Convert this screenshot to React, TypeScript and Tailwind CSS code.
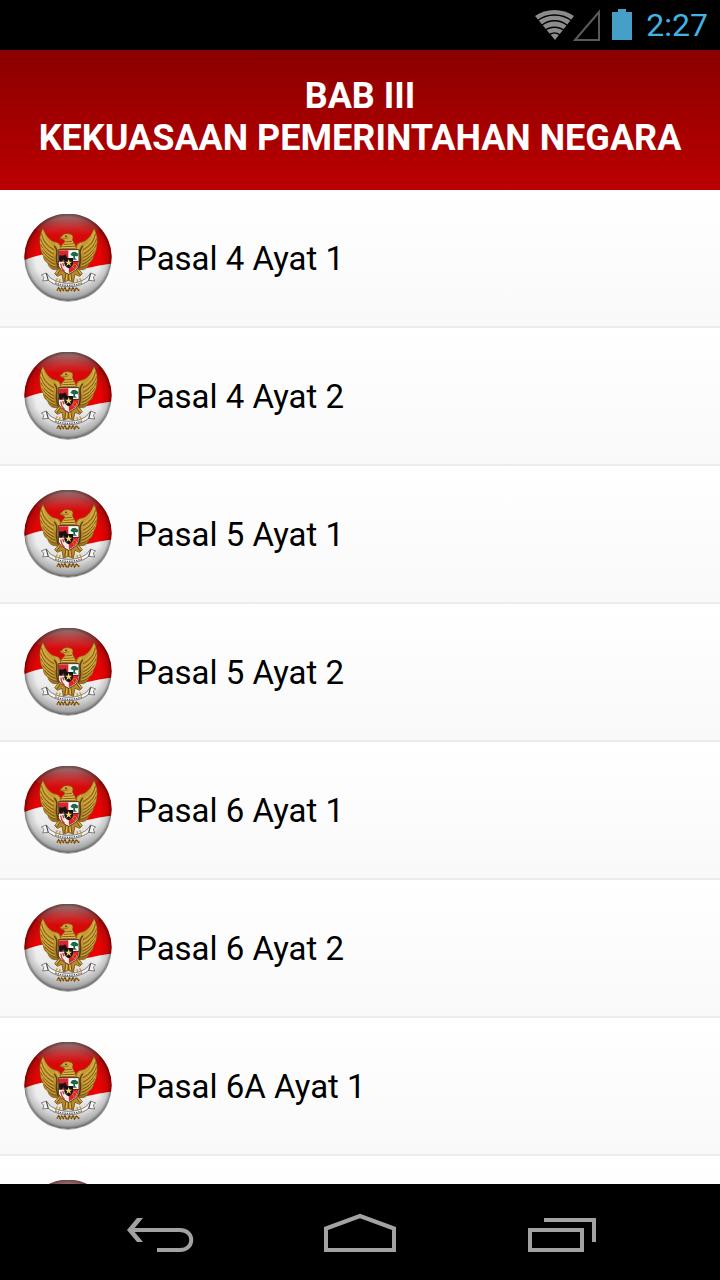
import { useId } from "react";

const articles = [
  "Pasal 4 Ayat 1",
  "Pasal 4 Ayat 2",
  "Pasal 5 Ayat 1",
  "Pasal 5 Ayat 2",
  "Pasal 6 Ayat 1",
  "Pasal 6 Ayat 2",
  "Pasal 6A Ayat 1",
  "Pasal 6A Ayat 2",
];

function Wing({ gold }: { gold: string }) {
  return (
    <g>
      <path
        d="M81 70 C73 84 69 102 72 118 C72 132 76 144 82 152 C82 162 88 170 95 174 C97 184 104 192 113 194 L134 194 L136 132 C135 120 128 112 118 111 C104 110 90 94 81 70 Z"
        fill={gold}
        stroke="#6d4812"
        strokeWidth="1.5"
      />
      <path
        d="M77 86 C80 108 94 124 114 134 M74 101 C79 122 94 137 113 147 M75 118 C81 136 95 149 113 158 M80 137 C87 151 99 160 114 168 M86 154 C94 165 104 172 117 178 M97 174 C104 181 112 184 122 187"
        fill="none"
        stroke="#6d4812"
        strokeWidth="2.5"
      />
      <path
        d="M80 80 C83 104 98 120 116 128 M75 94 C79 115 94 131 113 141 M74 110 C80 129 94 144 112 153 M78 128 C84 144 97 155 113 163 M84 147 C91 159 102 167 115 173 M93 167 C100 176 108 180 119 183"
        fill="none"
        stroke="#e2c04e"
        strokeWidth="2"
      />
      <path
        d="M114 122 C121 128 124 138 122 150 C119 164 122 176 127 190"
        fill="none"
        stroke="#5e3c0e"
        strokeWidth="4"
      />
      <path d="M119 117 C127 121 130 130 127 142" fill="none" stroke="#e2c04e" strokeWidth="3" />
    </g>
  );
}

function GarudaBadge() {
  const id = useId();
  const red = `${id}red`;
  const white = `${id}white`;
  const rim = `${id}rim`;
  const gold = `${id}gold`;
  const gloss = `${id}gloss`;
  const clip = `${id}clip`;
  return (
    <svg viewBox="24 27 264 264" className="size-22 shrink-0" aria-hidden="true">
      <defs>
        <linearGradient id={red} x1="0" y1="0" x2="0" y2="1">
          <stop offset="0" stopColor="#a81014" />
          <stop offset="0.3" stopColor="#d40a0a" />
          <stop offset="1" stopColor="#f00000" />
        </linearGradient>
        <linearGradient id={white} x1="0" y1="0" x2="0" y2="1">
          <stop offset="0" stopColor="#fafafa" />
          <stop offset="0.65" stopColor="#ececec" />
          <stop offset="1" stopColor="#bdbdbd" />
        </linearGradient>
        <linearGradient id={gloss} x1="0" y1="0" x2="0" y2="1">
          <stop offset="0" stopColor="#b8aaaa" stopOpacity="0.9" />
          <stop offset="0.5" stopColor="#b88a8a" stopOpacity="0.4" />
          <stop offset="1" stopColor="#c86060" stopOpacity="0" />
        </linearGradient>
        <radialGradient id={rim}>
          <stop offset="0.74" stopColor="#000" stopOpacity="0" />
          <stop offset="0.92" stopColor="#000" stopOpacity="0.16" />
          <stop offset="1" stopColor="#000" stopOpacity="0.5" />
        </radialGradient>
        <linearGradient id={gold} x1="0" y1="0" x2="0" y2="1">
          <stop offset="0" stopColor="#cda338" />
          <stop offset="0.6" stopColor="#bf9430" />
          <stop offset="1" stopColor="#98701e" />
        </linearGradient>
        <clipPath id={clip}>
          <circle cx="156" cy="157" r="131" />
        </clipPath>
      </defs>
      <circle cx="156" cy="159" r="131" fill="#9a9a9a" />
      <g clipPath={`url(#${clip})`}>
        <rect x="24" y="26" width="264" height="264" fill={`url(#${white})`} />
        <path
          d="M24 26 H288 V176 C262 178 238 184 206 190 C170 178 120 142 92 147 C66 150 44 158 24 166 Z"
          fill={`url(#${red})`}
        />
        <ellipse cx="156" cy="58" rx="106" ry="34" fill={`url(#${gloss})`} />
        <circle cx="156" cy="157" r="131" fill={`url(#${rim})`} />
      </g>

      <Wing gold={`url(#${gold})`} />
      <g transform="translate(315 0) scale(-1 1)">
        <Wing gold={`url(#${gold})`} />
      </g>

      <path
        d="M130 188 L116 206 L124 214 L138 208 L142 232 L157 226 L172 232 L177 208 L191 214 L199 206 L185 188 Z"
        fill="#b98a28"
        stroke="#5c3b0c"
        strokeWidth="2"
      />
      <path d="M150 204 L146 228 M157 206 V226 M164 204 L168 228 M134 194 L122 210 M181 194 L193 210" stroke="#6b4610" strokeWidth="2.5" />
      <path d="M153 206 L151 226 M161 206 L164 226 M128 196 L120 206 M187 196 L195 206" stroke="#efcc5c" strokeWidth="2.5" />

      <path
        d="M131 97 L138 94 C140 86 152 84 161 87 C169 88 173 94 170 101 C169 107 174 112 178 120 L182 136 H133 C133 125 138 118 145 112 C147 108 146 106 142 104 C138 101 134 102 131 105 L135 100 Z"
        fill="#d0a43a"
        stroke="#6d4510"
        strokeWidth="1.5"
      />
      <path d="M148 111 L168 109 M143 118 L173 116 M139 125 L176 124 M137 131 L178 131" stroke="#7a5216" strokeWidth="2.5" />
      <path d="M147 115 L170 113 M141 122 L174 120 M139 128 L176 128" stroke="#e6c557" strokeWidth="2" />
      <path d="M136 99 L147 101 L158 98" fill="none" stroke="#8a5518" strokeWidth="2" />
      <circle cx="150" cy="94" r="2.5" fill="#241300" />

      <path
        d="M127 134 H189 V176 C189 192 172 201 158 208 C144 201 127 192 127 176 Z"
        fill="#fff"
        stroke="#28180a"
        strokeWidth="2.5"
      />
      <path d="M129 136 H157 V168 H129 Z" fill="#d8262a" />
      <path d="M158 168 H187 V176 C187 190 172 198 158 205 Z" fill="#d8262a" />
      <path d="M129 170 H157 V204 C144 198 129 190 129 176 Z" fill="#f2ece6" />
      <path d="M129 158 L131 150 L137 152 L143 151 L149 148 L153 158 L148 169 L143 163 L135 171 L130 167 Z" fill="#181214" />
      <path d="M170 164 H183 L177 159 V154 H185 L187 147 L178 140 L168 142 L163 150 L172 154 V160 Z" fill="#1c6844" />
      <path d="M134 176 L138 190 L146 200 M140 174 L144 184" fill="none" stroke="#c03c34" strokeWidth="4" />
      <circle cx="176" cy="184" r="6" fill="none" stroke="#e6ac38" strokeWidth="3" strokeDasharray="3 2" />
      <path d="M127 169 H189" stroke="#201510" strokeWidth="2" />
      <path d="M145 159 H171 V175 Q169 186 158 190 Q147 186 145 175 Z" fill="#151013" />
      <path d="M158 162 L161 170 H169 L162 175 L165 183 L158 178 L151 183 L154 175 L147 170 H155 Z" fill="#f8dc58" />

      <path
        d="M76 210 L91 204 L103 219 C122 231 140 235 157 235 C175 235 195 231 212 219 L224 204 L239 210 L232 216 L236 228 L218 226 C198 241 178 245 157 245 C136 245 116 241 97 226 L80 228 L84 217 Z"
        fill="#f4f4f4"
        stroke="#4e4947"
        strokeWidth="2"
      />
      <path d="M91 205 L97 227 M224 205 L218 227" stroke="#4e4947" strokeWidth="3.5" />
      <path d="M118 234 Q157 248 197 234" fill="none" stroke="#5a5a5a" strokeWidth="4" strokeDasharray="4 3" />
      <path d="M124 220 L118 231 M132 222 L130 234 M183 222 L185 234 M191 220 L197 231" stroke="#c8982b" strokeWidth="4" />
      <path
        d="M123 257 L128 249 L133 257 L137 250 L142 256 L147 249 L151 257 H157 L160 250 L166 256 L171 249 L175 257 L181 250 L190 257"
        fill="none"
        stroke="#6b4614"
        strokeWidth="5"
      />
      <path d="M125 254 H189" stroke="#d2a12e" strokeWidth="4" strokeDasharray="5 4" />
    </svg>
  );
}

function StatusBar() {
  return (
    <div className="flex h-[50px] shrink-0 items-center justify-end bg-black pr-3">
      <svg viewBox="0 0 100 50" className="h-[50px] w-[100px]" aria-hidden="true">
        <path d="M1 16 C12 8 29 8 40 16 L21 40 Z" fill="#8c8c8c" />
        <path
          d="M3 21 C13 13 28 13 38 21 M7 26 C15 19 26 19 34 26 M10 31 C16 26 25 26 31 31 M14 36 C18 32 23 32 27 36"
          fill="none"
          stroke="#000"
          strokeWidth="1.3"
        />
        <path d="M41 40 L65 12 V40 Z" fill="none" stroke="#5a5a5a" strokeWidth="2" />
        <path d="M78 12 H84 V9 H92 V12 H98 V40 H78 Z" fill="#459fc6" />
      </svg>
      <time className="ml-3 text-[32px] leading-[52px] text-[#42b4e4]">2:27</time>
    </div>
  );
}

export default function App() {
  return (
    <div className="flex h-screen flex-col overflow-hidden bg-white font-['Roboto',sans-serif]">
      <StatusBar />
      <header className="shrink-0 bg-linear-to-b from-[#8b0000] to-[#bb0000] px-6 pt-[25px] pb-[31px] text-center text-white">
        <h1 className="text-[36px] leading-[42px] font-bold">
          BAB III
          <br />
          KEKUASAAN PEMERINTAHAN NEGARA
        </h1>
      </header>
      <main className="min-h-0 flex-1 overflow-y-auto [scrollbar-width:none]">
        <ul>
          {articles.map((title) => (
            <li key={title} className="border-b-2 border-[#ececec]">
              <a
                href="#"
                className="flex items-center gap-6 bg-linear-to-b from-white to-[#f9f9f9] p-6 text-[33px] leading-[42px] text-black"
              >
                <GarudaBadge />
                <span className="pt-0.5">{title}</span>
              </a>
            </li>
          ))}
        </ul>
      </main>
      <nav className="flex h-24 shrink-0 items-center justify-center gap-[104px] bg-black">
        <button type="button" aria-label="Kembali" className="h-24 w-25">
          <svg viewBox="0 0 100 96" fill="none" stroke="#a2a2a2" strokeWidth="4" aria-hidden="true">
            <path d="M25 46 H74 C89 46 89 66 74 66 H51" />
            <path d="M21 46 L31 34 H37 L27 46 L37 58 H31 Z" fill="#a2a2a2" stroke="none" />
          </svg>
        </button>
        <button type="button" aria-label="Beranda" className="h-24 w-25">
          <svg viewBox="0 0 100 96" fill="none" stroke="#a2a2a2" strokeWidth="4" aria-hidden="true">
            <path d="M16 66 V44.5 L50 32 L84 44.5 V66 Z" />
          </svg>
        </button>
        <button type="button" aria-label="Aplikasi terbaru" className="h-24 w-25">
          <svg viewBox="0 0 100 96" fill="none" stroke="#a2a2a2" strokeWidth="4" aria-hidden="true">
            <path d="M16 46 H68 V66 H16 Z M30 36 H80 V58" />
          </svg>
        </button>
      </nav>
    </div>
  );
}
